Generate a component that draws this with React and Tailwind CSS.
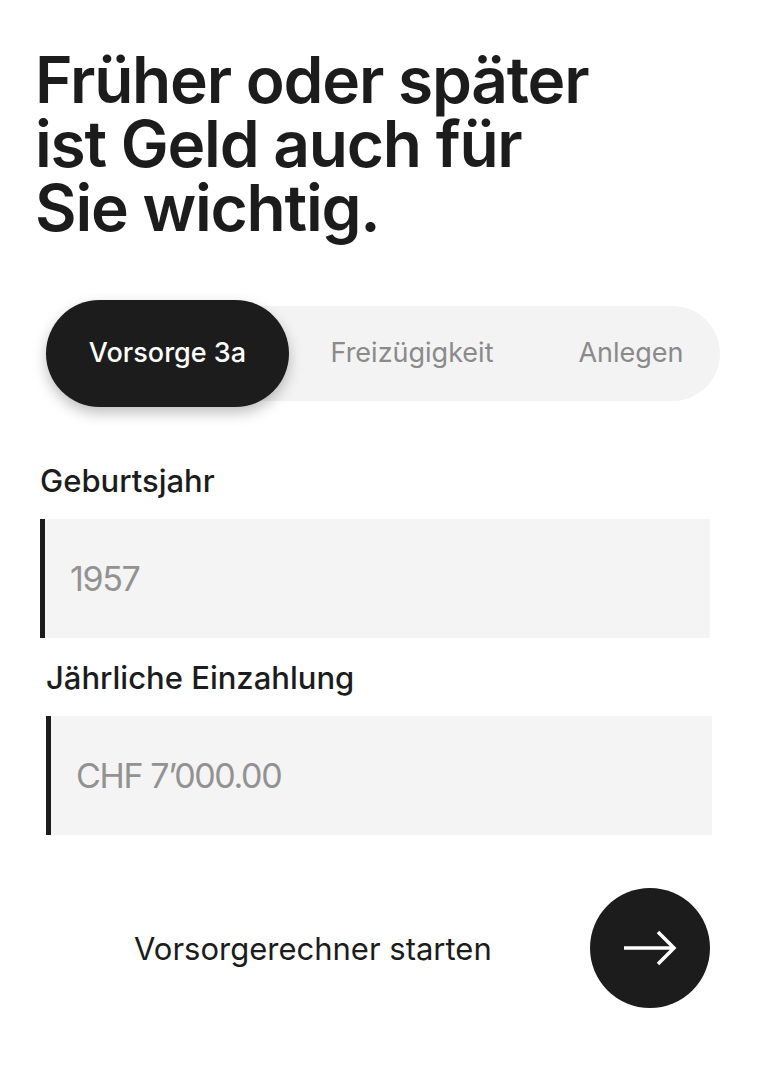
import React from 'react';

const font = { fontFamily: 'Inter, "Noto Sans", sans-serif' };

function Field({ label, placeholder, className }) {
  return (
    <div className={className}>
      <label className="block text-[31px] leading-[36px] font-medium text-[#1c1c1c]">{label}</label>
      <input
        type="text"
        placeholder={placeholder}
        className="mt-[20px] block w-full h-[119px] bg-[#f4f4f4] border-l-[5px] border-[#1c1c1c] pl-[25px] text-[34px] tracking-[-0.04em] text-[#1c1c1c] placeholder:text-[#929292] outline-none"
      />
    </div>
  );
}

export default function App() {
  const tabs = ['Vorsorge 3a', 'Freizügigkeit', 'Anlegen'];
  return (
    <div className="min-h-screen bg-white text-[#1c1c1c]" style={font}>
      <div className="pt-[48px] pl-[35px]">
        <h1 className="text-[64px] leading-[64px] font-semibold tracking-[-0.019em]">
          Früher oder später
          <br />
          ist Geld auch für
          <br />
          Sie wichtig.
        </h1>
      </div>

      <div className="mt-[66px] ml-[46px] w-[674px] h-[95px] rounded-full bg-[#f3f3f3] flex items-center">
        <button className="w-[243px] h-[107px] shrink-0 rounded-full bg-[#1c1c1c] text-white text-[27px] font-medium shadow-[0_6px_14px_rgba(0,0,0,0.25)]">
          {tabs[0]}
        </button>
        <button className="w-[246px] text-[27px] text-[#8a8a8a]">{tabs[1]}</button>
        <button className="flex-1 text-[27px] text-[#8a8a8a] pl-[7px]">{tabs[2]}</button>
      </div>

      <Field label="Geburtsjahr" placeholder="1957" className="mt-[62px] ml-[40px] w-[670px]" />
      <Field label="Jährliche Einzahlung" placeholder="CHF 7’000.00" className="mt-[22px] ml-[46px] w-[666px]" />

      <div className="mt-[53px] ml-[134px] w-[576px] flex items-center justify-between">
        <span className="text-[31px] leading-[36px] mt-[2px]">Vorsorgerechner starten</span>
        <button className="w-[120px] h-[120px] rounded-full bg-[#1c1c1c] flex items-center justify-center">
          <svg width="56" height="36" viewBox="0 0 56 36" fill="none" stroke="white" strokeWidth="3.5">
            <path d="M2 18H52" />
            <path d="M36 2L52 18L36 34" />
          </svg>
        </button>
      </div>
    </div>
  );
}
